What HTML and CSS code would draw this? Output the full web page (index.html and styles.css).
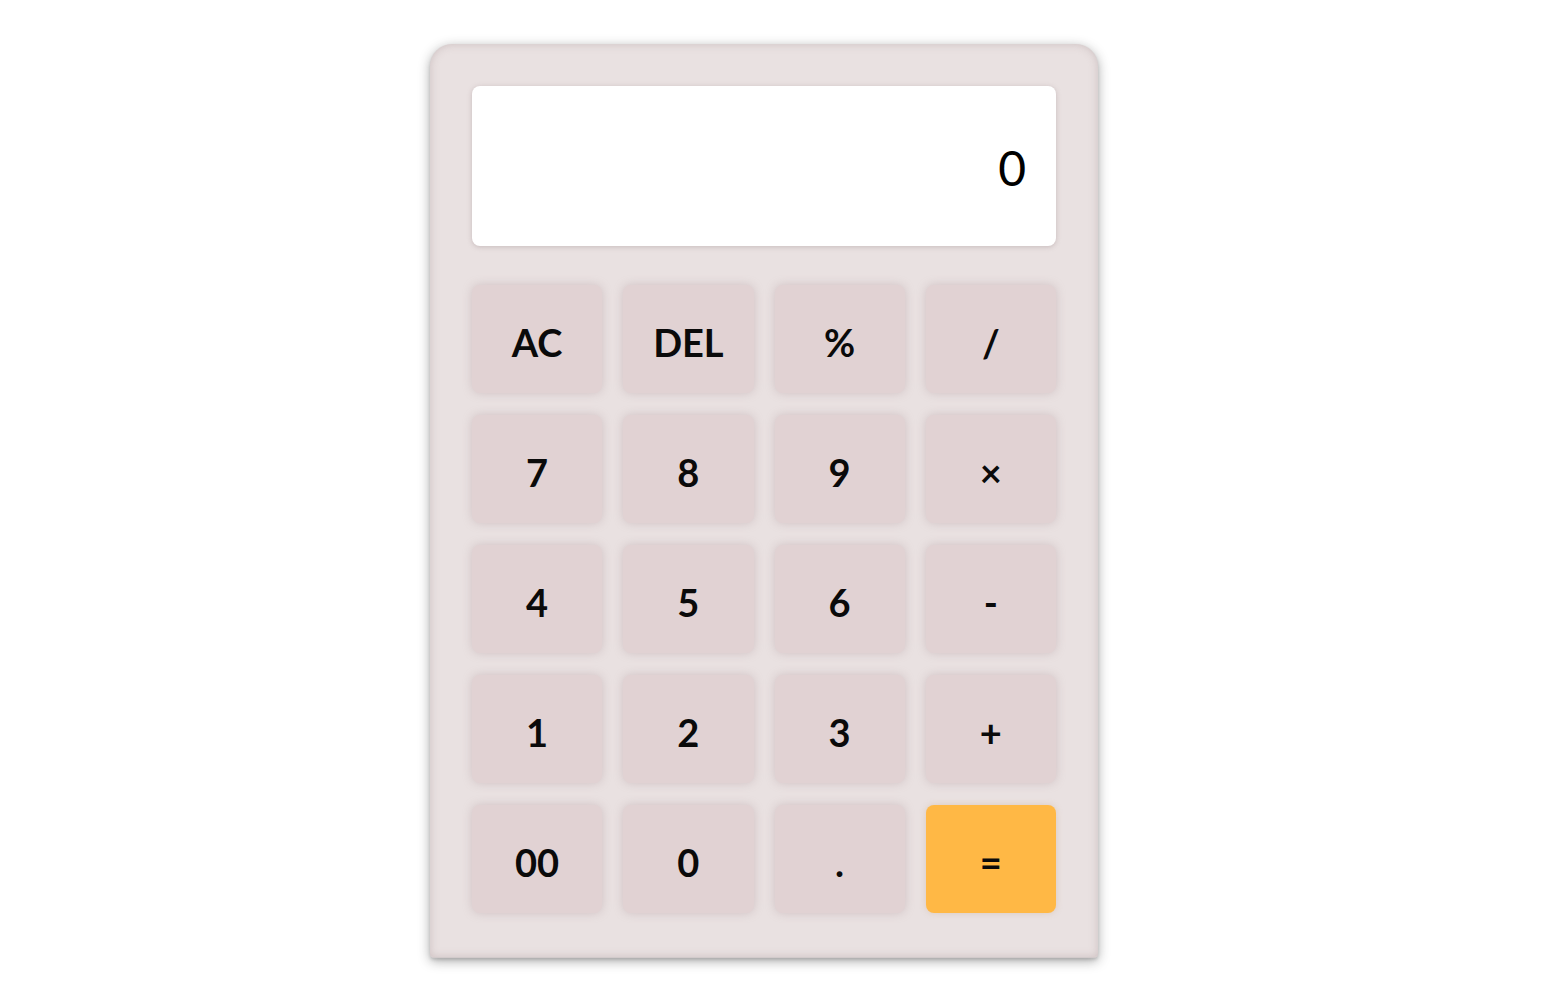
FILE: index.html
```
<!DOCTYPE html>
<html lang="en">
<head>
<meta charset="utf-8">
<title>Calculator</title>
<link rel="stylesheet" href="styles.css">
</head>
<body>
<div class="page">
  <div class="calculator">
    <div class="display"><span class="value">0</span></div>
    <div class="keys">
      <button class="key">AC</button>
      <button class="key">DEL</button>
      <button class="key">%</button>
      <button class="key">/</button>
      <button class="key">7</button>
      <button class="key">8</button>
      <button class="key">9</button>
      <button class="key">×</button>
      <button class="key">4</button>
      <button class="key">5</button>
      <button class="key">6</button>
      <button class="key">-</button>
      <button class="key">1</button>
      <button class="key">2</button>
      <button class="key">3</button>
      <button class="key">+</button>
      <button class="key">00</button>
      <button class="key">0</button>
      <button class="key">.</button>
      <button class="key key-equal">=</button>
    </div>
  </div>
</div>
</body>
</html>
```
FILE: styles.css
```
html, body {
  margin: 0;
  padding: 0;
  background: #ffffff;
  font-family: Lato, "Open Sans", sans-serif;
}

.page {
  padding: 44px 0 40px 430px;
}

.calculator {
  box-sizing: border-box;
  width: 668px;
  height: 914px;
  padding: 42px 42px 44px;
  background: #e9e1e1;
  border-radius: 22px 22px 4px 4px;
  border-bottom: 1px solid #d2cacb;
  box-shadow: 0 3px 12px rgba(40, 40, 40, 0.4), 0 2px 3px rgba(0, 0, 0, 0.12), inset 0 0 8px rgba(170, 150, 152, 0.45);
  display: flex;
  flex-direction: column;
}

.display {
  height: 160px;
  background: #ffffff;
  border-radius: 8px;
  box-shadow: 0 1px 5px rgba(150, 130, 132, 0.4);
  display: flex;
  align-items: center;
  justify-content: flex-end;
  padding-right: 30px;
}

.value {
  font-size: 48px;
  font-weight: 400;
  color: #000000;
  line-height: 1;
  margin-top: 4px;
}

.keys {
  margin-top: 39px;
  display: grid;
  grid-template-columns: repeat(4, 1fr);
  grid-auto-rows: 108px;
  column-gap: 21px;
  row-gap: 22px;
}

.key {
  border: none;
  border-radius: 8px;
  background: #e1d2d3;
  box-shadow: 0 0 10px rgba(170, 145, 150, 0.4);
  font-family: Lato, "Open Sans", sans-serif;
  font-weight: 700;
  font-size: 38px;
  color: #0a0a0a;
  padding: 5px 0 0;
  display: flex;
  align-items: center;
  justify-content: center;
}

.key-equal {
  background: #ffb845;
  box-shadow: 0 0 6px rgba(200, 160, 120, 0.35);
}
```
